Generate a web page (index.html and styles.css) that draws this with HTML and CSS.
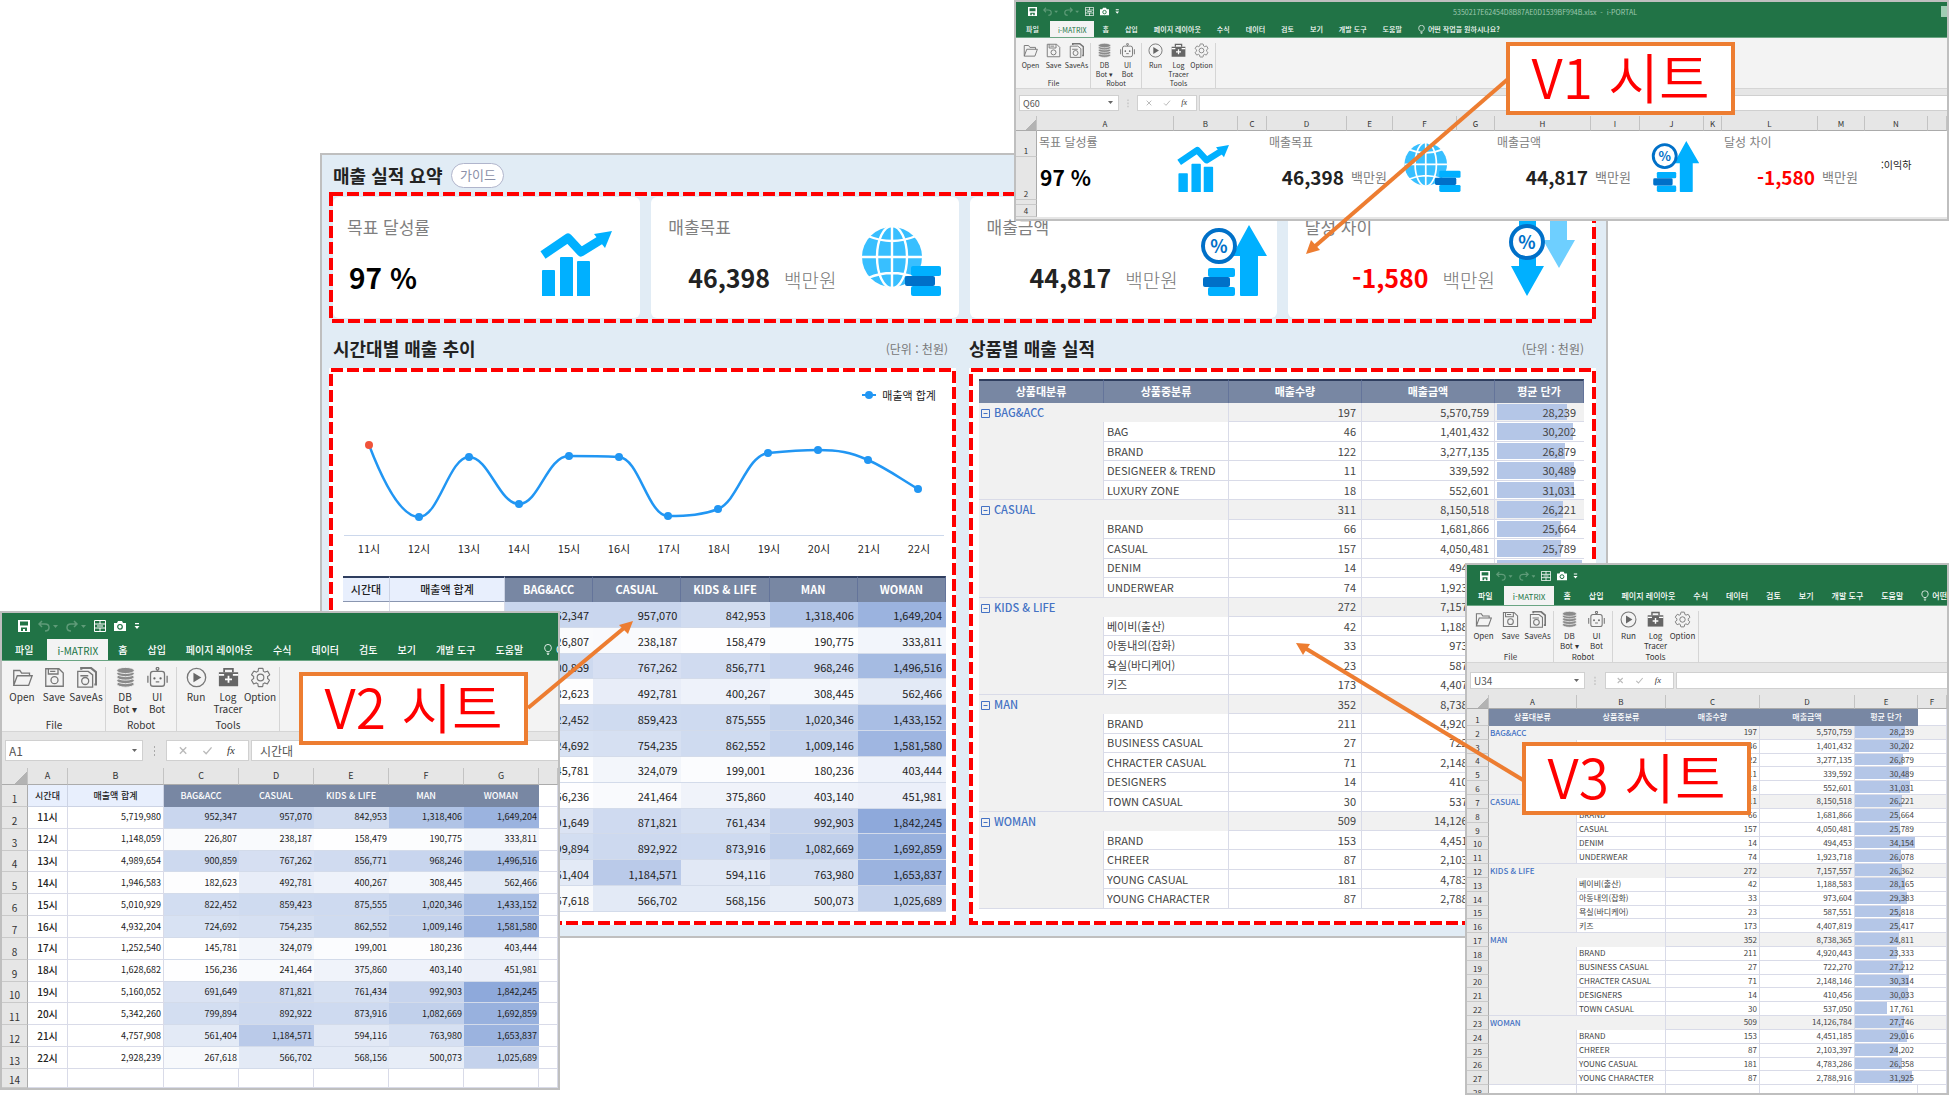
FILE: index.html
```html
<!DOCTYPE html>
<html lang="ko">
<head>
<meta charset="utf-8">
<title>매출 실적 요약</title>
<link rel="stylesheet" href="styles.css">
</head>
<body>
<svg class="symbols" aria-hidden="true">
  <symbol id="k-chart" viewBox="0 0 72 65"><path fill="#00b0ff" d="M2 40q0-1 1-1h11q1 0 1 1v25H2zM20 27q0-1 1-1h11q1 0 1 1v38H20zM37 31q0-1 1-1h11q1 0 1 1v34H37z"/><path d="M3 24 28 7 41 21 62 8" fill="none" stroke="#00b0ff" stroke-width="9" stroke-linejoin="round"/><path fill="#00b0ff" d="M54 3 72 0 65 17z"/></symbol>
  <symbol id="k-globe" viewBox="0 0 79 69"><circle cx="30" cy="30" r="30" fill="#38bfff"/><g fill="none" stroke="#fff" stroke-width="2.4"><path d="M30 0v60M0 30h60M6 9q24 10 48 0M6 51q24-10 48 0"/><ellipse cx="30" cy="30" rx="15" ry="31"/></g><rect x="49" y="39" width="30" height="10" rx="2" fill="#00b0ff"/><rect x="49" y="59" width="30" height="10" rx="2" fill="#00b0ff"/><rect x="43" y="49" width="30" height="10" rx="2" fill="#0070c8"/></symbol>
  <symbol id="k-up" viewBox="0 0 66 71"><path fill="#00b0ff" d="M48 0 66 31H57V70q0 1-1 1H40q-1 0-1-1V31H31z"/><rect x="7" y="43" width="27" height="9" rx="2" fill="#00b0ff"/><rect x="7" y="62" width="27" height="9" rx="2" fill="#00b0ff"/><rect x="2" y="52" width="27" height="10" rx="2" fill="#0070c8"/><circle cx="18" cy="21" r="16" fill="#fff" stroke="#0070c8" stroke-width="4"/><text x="18" y="28" text-anchor="middle" font-size="18" font-weight="700" fill="#0070c8">%</text></symbol>
  <symbol id="k-down" viewBox="0 0 66 81"><path fill="#6ecfff" d="M41 0h17v25h8L50 53 34 25h7z"/><path fill="#00b0ff" d="M10 0h17v51h8L18 81 2 51h8z"/><circle cx="18" cy="27" r="16" fill="#fff" stroke="#0070c8" stroke-width="4"/><text x="18" y="34" text-anchor="middle" font-size="18" font-weight="700" fill="#0070c8">%</text></symbol>

  <symbol id="q-save" viewBox="0 0 12 12"><path fill="#fff" fill-rule="evenodd" d="M0 0h12v12H0zM2 1.500v4h8v-4zM3 7.500V11h2V9h2v2h2V7.500z"/></symbol>
  <symbol id="q-undo" viewBox="0 0 20 12"><g fill="none" stroke="#5f9b78" stroke-width="1.500"><path d="M4 1 1 4l3 3M1 4h6q4 0 4 3.500T7 11"/></g><path fill="#5f9b78" d="M15 5h5l-2.500 3z"/></symbol>
  <symbol id="q-redo" viewBox="0 0 20 12"><g fill="none" stroke="#5f9b78" stroke-width="1.500"><path d="m8 1 3 3-3 3M11 4H5Q1 4 1 7.500T5 11"/></g><path fill="#5f9b78" d="M15 5h5l-2.500 3z"/></symbol>
  <symbol id="q-grid" viewBox="0 0 12 12"><g fill="none" stroke="#fff"><path d="M.5.5h11v11H.5zM.5 4h11M.5 8h11M6 .5V4M6 8v3.500M3 6h6"/></g></symbol>
  <symbol id="q-camera" viewBox="0 0 12 12"><path fill="#fff" d="M0 3h3l1-2h4l1 2h3v8H0z"/><circle cx="6" cy="6.800" r="2.300" fill="none" stroke="#217346" stroke-width="1.200"/></symbol>
  <symbol id="q-more" viewBox="0 0 6 12"><path fill="#fff" d="M1 3h4v1.200H1zM.5 6h5L3 9z"/></symbol>
  <symbol id="q-bulb" viewBox="0 0 10 13"><g fill="none" stroke="#fff"><path d="M3.500 9Q1 7 1 4.500a4 4 0 0 1 8 0Q9 7 6.500 9zM3.500 11h3M4 12.500h2"/></g></symbol>

  <symbol id="r-open" viewBox="0 0 24 24"><path d="M2 21V4h7l2 3h9v3M2 21 6 10h17l-4 11z" class="ln"/></symbol>
  <symbol id="r-save" viewBox="0 0 24 24"><path d="M2 2h15l5 5v15H2zM5 2v6h11V2M7 5h6" class="ln"/><circle cx="12" cy="15" r="4" class="ln"/></symbol>
  <symbol id="r-saveas" viewBox="0 0 24 24"><path d="M6 3V1h11l6 5v14h-2" fill="none" stroke="#777" stroke-width="2.500"/><path d="M2 5h12l5 4v14H2zM5 10h9" class="ln"/><circle cx="10.500" cy="16" r="4" class="ln"/></symbol>
  <symbol id="r-db" viewBox="0 0 24 24"><g fill="#8a8a8a" stroke="#f3f3f3"><ellipse cx="12" cy="19.500" rx="10" ry="3.500"/><ellipse cx="12" cy="15.500" rx="10" ry="3.500"/><ellipse cx="12" cy="11.500" rx="10" ry="3.500"/><ellipse cx="12" cy="7.500" rx="10" ry="3.500"/><ellipse cx="12" cy="4" rx="10" ry="3.500"/></g></symbol>
  <symbol id="r-bot" viewBox="0 0 24 24"><rect x="4" y="5" width="16" height="17" rx="3" class="ln"/><path d="M12 5V3M1 10v8M23 10v8M10 17h4" class="ln"/><circle cx="12" cy="2" r="1.500" class="ln"/><circle cx="8.500" cy="13" r="1.300" fill="#666"/><circle cx="15.500" cy="13" r="1.300" fill="#666"/></symbol>
  <symbol id="r-run" viewBox="0 0 24 24"><circle cx="12" cy="12" r="10.500" class="ln"/><path d="M8.500 6.500v11l9-5.500z" fill="#666"/></symbol>
  <symbol id="r-log" viewBox="0 0 24 24"><path d="M7 6V2h10v4" fill="none" stroke="#666" stroke-width="2"/><path d="M1 6h22v16H1z" fill="#666"/><path d="M12 10v8M8 14h8M1 9h6M17 9h6" stroke="#fff" stroke-width="2"/></symbol>
  <symbol id="r-option" viewBox="1 1 22 22"><path class="ln ln-thin" d="M19.400 13c.04-.3.060-.6.060-1s0-.6-.07-.94l2-1.580c.2-.14.230-.4.120-.6l-1.900-3.300c-.12-.2-.37-.3-.6-.2l-2.400.96c-.5-.4-1-.7-1.600-.94l-.36-2.540c-.04-.24-.24-.4-.5-.4h-3.840c-.24 0-.43.160-.47.4l-.36 2.540c-.6.240-1.130.570-1.620.94l-2.400-.96c-.2-.08-.47 0-.6.220L2.740 8.870c-.12.2-.08.470.12.6l2 1.600c-.04.3-.07.6-.07.930s.02.640.07.940l-2 1.580c-.2.140-.23.4-.12.6l1.900 3.300c.12.2.37.3.6.2l2.400-.96c.5.4 1 .7 1.600.940l.36 2.540c.05.240.240.4.5.4h3.800c.24 0 .44-.16.470-.4l.36-2.540c.6-.24 1.130-.56 1.620-.94l2.400.96c.2.080.470 0 .6-.2l1.900-3.300c.12-.2.070-.47-.12-.6z"/><circle cx="12" cy="12" r="3.500" class="ln ln-thin"/></symbol>
</svg>

<main class="board">
  <section class="dashboard">
    <header class="dash-head">
      <h1>매출 실적 요약</h1>
      <button class="guide" type="button">가이드</button>
    </header>
    <div class="frame kpis">
      <article class="card card-rate"><div class="card-text"><h2>목표 달성률</h2><p><b>97 %</b></p></div><svg width="72" height="65"><use href="#k-chart"/></svg></article>
      <article class="card card-goal"><div class="card-text"><h2>매출목표</h2><p><b>46,398</b><span>백만원</span></p></div><svg width="79" height="69"><use href="#k-globe"/></svg></article>
      <article class="card card-sales"><div class="card-text"><h2>매출금액</h2><p><b>44,817</b><span>백만원</span></p></div><svg width="66" height="71"><use href="#k-up"/></svg></article>
      <article class="card card-gap"><div class="card-text"><h2>달성 차이</h2><p><b class="minus">-1,580</b><span>백만원</span></p></div><svg width="66" height="81"><use href="#k-down"/></svg></article>
      <svg class="dashes"><rect x="2" y="2"/></svg>
    </div>
    <div class="columns">
      <section>
        <header class="sub-head sub-left"><h2>시간대별 매출 추이</h2><span>(단위 : 천원)</span></header>
        <div class="frame panel panel-left">
          <div class="chart">
            <p class="legend"><svg width="14" height="8"><path d="M0 4h14" stroke="#2196f3" stroke-width="2"/><circle cx="7" cy="4" r="4" fill="#2196f3"/></svg>매출액 합계</p>
            <svg class="plot" viewBox="0 0 600 131" preserveAspectRatio="none">
              <path fill="none" stroke="#2196f3" stroke-width="2.5" d="M25 41C40 80 58 113 75 113C95 113 105 53 125 53C145 53 155 100 175 100C195 100 203 52 225 52C245 52 255 52 275 53C295 54 304 112 324 112C344 112 359 111 374 105C394 97 402 52 424 49C444 47 456 46 474 46C494 46 506 48 524 56C542 64 554 73 574 85"/>
              <g fill="#2196f3"><circle cx="75" cy="113" r="4"/><circle cx="125" cy="53" r="4"/><circle cx="175" cy="100" r="4"/><circle cx="225" cy="52" r="4"/><circle cx="275" cy="53" r="4"/><circle cx="324" cy="112" r="4"/><circle cx="374" cy="105" r="4"/><circle cx="424" cy="49" r="4"/><circle cx="474" cy="46" r="4"/><circle cx="524" cy="56" r="4"/><circle cx="574" cy="85" r="4"/></g>
              <circle cx="25" cy="41" r="4" fill="#f0533a"/>
            </svg>
            <div class="hours"><span>11시</span><span>12시</span><span>13시</span><span>14시</span><span>15시</span><span>16시</span><span>17시</span><span>18시</span><span>19시</span><span>20시</span><span>21시</span><span>22시</span></div>
          </div>
          <table class="grid heat" id="dash-hours"></table>
          <svg class="dashes"><rect x="2" y="2"/></svg>
        </div>
      </section>
      <section>
        <header class="sub-head sub-right"><h2>상품별 매출 실적</h2><span>(단위 : 천원)</span></header>
        <div class="frame panel panel-right">
          <table class="grid tree" id="dash-products"></table>
          <svg class="dashes"><rect x="2" y="2"/></svg>
        </div>
      </section>
    </div>
  </section>

  <section class="window win-v1" data-cell="Q60" data-value="" data-title="5350217E62454D8B87AE0D1539BF994B.xlsx  -  i-PORTAL" data-tell="어떤 작업을 원하시나요?">
    <table class="sheet" id="sheet-v1">
      <colgroup><col style="width:21px"><col style="width:137px"><col style="width:64px"><col style="width:29px"><col style="width:80px"><col style="width:46px"><col style="width:64px"><col style="width:38px"><col style="width:96px"><col style="width:49px"><col style="width:64px"><col style="width:18px"><col style="width:96px"><col style="width:47px"><col style="width:63px"><col></colgroup>
      <thead><tr><td class="corner"></td><th>A</th><th>B</th><th>C</th><th>D</th><th>E</th><th>F</th><th>G</th><th>H</th><th>I</th><th>J</th><th>K</th><th>L</th><th>M</th><th>N</th><th></th></tr></thead>
      <tbody>
        <tr class="r-label"><th>1</th><td>목표 달성률</td><td rowspan="2" class="pic"><svg width="52" height="47"><use href="#k-chart"/></svg></td><td></td><td colspan="2">매출목표</td><td rowspan="2" class="pic pic-right"><svg width="57" height="49"><use href="#k-globe"/></svg></td><td></td><td colspan="2">매출금액</td><td rowspan="2" class="pic pic-right"><svg width="49" height="51"><use href="#k-up"/></svg></td><td></td><td colspan="2">달성 차이</td><td rowspan="2" class="note">:이익하</td><td></td></tr>
        <tr class="r-value"><th>2</th><td class="rate">97 %</td><td></td><td class="num">46,398</td><td>백만원</td><td></td><td class="num">44,817</td><td>백만원</td><td></td><td class="num minus">-1,580</td><td>백만원</td><td></td></tr>
        <tr class="r-thin"><th></th><td colspan="15"></td></tr>
        <tr><th>4</th><td colspan="15"></td></tr>
      </tbody>
    </table>
  </section>

  <section class="window win-v2" data-cell="A1" data-value="시간대" data-title="" data-tell="어떤 작업을 원하시나요?">
    <table class="sheet heat" id="sheet-v2"></table>
  </section>

  <section class="window win-v3" data-cell="U34" data-value="" data-title="" data-tell="어떤 작업을 원하시나요?">
    <table class="sheet tree" id="sheet-v3"></table>
  </section>

  <svg class="arrows" width="1949" height="1095">
    <g stroke="#ed7d31" stroke-width="4"><path d="M1508 79 1313 248"/><path d="M528 708 624 628"/><path d="M1523 780 1305 648"/></g>
    <g fill="#ed7d31"><path d="M1306 254 1311 240 1320 250z"/><path d="M633 621 628 634 619 625z"/><path d="M1296 643 1310 644 1303 655z"/></g>
  </svg>
  <p class="callout call-v1">V1 시트</p>
  <p class="callout call-v2">V2 시트</p>
  <p class="callout call-v3">V3 시트</p>
</main>
<script src="app.js"></script>
</body>
</html>
```
FILE: styles.css
```css
* { box-sizing: border-box; }
body {
  margin: 0;
  background: #fff;
  color: #222;
  font-family: "Noto Sans CJK KR", "Noto Sans", sans-serif;
  font-size: 11px;
}
h1, h2, p { margin: 0; }
button, input { font: inherit; color: inherit; border: 0; padding: 0; margin: 0; background: none; }
.symbols { position: absolute; width: 0; height: 0; }
.ln { fill: none; stroke: #777; stroke-width: 1.5; }
.ln-thin { stroke-width: 1.2; }
.minus { color: #f00; }

.board { position: relative; min-height: 100vh; overflow: hidden; }

/* dashboard */
.dashboard {
  position: absolute;
  left: 320px;
  top: 153px;
  width: 1288px;
  padding: 0 10px 11px 7px;
  background: #e1ecf5;
  border: 2px solid #bfbfbf;
}
.dash-head { display: flex; align-items: center; gap: 9px; height: 37px; padding: 3px 4px 0; }
.dash-head h1, .sub-head h2 { font-size: 18px; font-weight: 500; line-height: 24px; }
.guide {
  width: 53px;
  height: 25px;
  border: 1px solid #b0b5cc;
  border-radius: 13px;
  background: #fff;
  color: #8b90a8;
  font-size: 13px;
  line-height: 20px;
}
.frame { position: relative; }
.dashes { position: absolute; inset: 0; width: 100%; height: 100%; pointer-events: none; }
.dashes rect {
  width: calc(100% - 4px);
  height: calc(100% - 4px);
  fill: none;
  stroke: #f00;
  stroke-width: 4;
  stroke-dasharray: 12 4;
}
.kpis { display: grid; grid-template-columns: repeat(4, 1fr); gap: 11px; padding: 5px 1px 5px 4px; }
.card { display: flex; align-items: flex-end; height: 121px; padding-bottom: 22px; background: #fff; border-radius: 6px; }
.card svg { flex: none; }
.card-text { flex: 1; align-self: flex-start; padding-top: 19px; text-align: right; }
.card h2 { padding-left: 17px; font-size: 17px; font-weight: 400; line-height: 22px; color: #808080; text-align: left; }
.card p { margin-top: 21px; line-height: 36px; white-space: nowrap; }
.card b { font-size: 25px; }
.card span { margin-left: 14px; font-size: 19px; font-weight: 300; color: #777; }
.card-rate { padding-right: 28px; }
.card-rate h2 { padding-left: 14px; }
.card-rate p { padding-left: 16px; text-align: left; color: #000; }
.card-rate b { font-size: 28px; }
.card-goal { padding-right: 18px; gap: 25px; }
.card-sales { padding-right: 10px; gap: 23px; }
.card-gap { padding-right: 20px; gap: 14px; }

.columns { display: grid; grid-template-columns: 1fr 1fr; gap: 13px; }
.sub-head { display: flex; justify-content: space-between; align-items: center; height: 45px; padding: 5px 12px 0 0; }
.sub-left { padding-left: 4px; padding-right: 8px; }
.dash-head h1, .sub-head h2 { font-weight: 700; }
.sub-head span { font-size: 12px; color: #777; }
.panel { height: 557px; background: #fff; }
.panel-left { padding: 4px 10px 0 14px; }
.panel-right { padding: 11px 12px 0 10px; }
.chart { height: 204px; padding: 14px 2px 0 1px; }
.legend { display: flex; align-items: center; justify-content: flex-end; gap: 6px; height: 18px; padding-right: 8px; }
.plot { display: block; width: 100%; height: 132px; border-bottom: 1px solid #ccd8ec; }
.hours { display: grid; grid-template-columns: repeat(12, 1fr); text-align: center; line-height: 24px; }

/* data tables */
table { width: 100%; border-spacing: 0; table-layout: fixed; }
th, td { padding: 0; white-space: nowrap; overflow: hidden; font-weight: 400; }
.heat td, .tree td { border-right: 1px solid #d9dbe8; border-bottom: 1px solid #d9dbe8; }
.grid thead th {
  height: 26px;
  border-top: 2px solid #2f3e5f;
  border-right: 1px solid #64749a;
  background: #7887a3;
  color: #fff;
  font-weight: 700;
}
.grid.heat { height: 336px; line-height: 16px; }
.grid.heat thead th.light { background: #e8effd; color: #222; font-weight: 500; border-right-color: #ccd3e4; border-bottom: 1px solid #8a96b0; }
.heat td { text-align: right; padding-right: 4px; }
.grid.heat thead th { line-height: 14px; padding-bottom: 2px; }
.grid.heat td { padding-top: 2px; }
.heat td.tint { border-right: 0; border-bottom-color: #d3dbea; }
.heat td.hour { text-align: center; font-weight: 500; padding-right: 0; }
.grid.tree { height: 530px; line-height: 15px; color: #444; }
.grid.tree thead th { height: 24px; padding-bottom: 2px; }
.tree td { text-align: right; padding-right: 5px; }
.tree td.name { text-align: left; padding-left: 3px; }
.tree td.group { text-align: left; padding-left: 2px; background: #f1f1f1; color: #4472c4; font-weight: 500; border-bottom: 0; }
.tree td.void { background: #f1f1f1; }
.tree tr.total td { background-color: #f1f1f1; }
.tree td.price { position: relative; padding-right: 8px; border-right: 0; }
.bar { position: absolute; left: 2px; top: 1px; bottom: 1px; background: #b4c6e7; }
.price span { position: relative; }
.fold { display: inline-block; width: 9px; height: 9px; margin-right: 4px; vertical-align: -1px; }
.fold svg { display: block; }

/* spreadsheet windows */
.window { position: absolute; overflow: hidden; border: 2px solid #bfbfbf; background: #e6e6e6; }
.win-v1 {
  left: 1014px; top: 0; width: 935px; height: 221px;
  --font: 7px; --pad: 8px; --bar: 19px; --tabs: 17px; --ribbon: 51px; --item: 23px; --icon: 15px; --line: 9px;
  --q: 9px; --qgap: 6px; --qpad: 12px; --gap: 6px; --box: 16px; --below: 5px; --name: 100px; --dots: 18px; --fx: 60px; --head: 15px; --cell: 9px;
}
.win-v2 {
  left: 0; top: 611px; width: 560px; height: 479px;
  --font: 10px; --pad: 10px; --bar: 26px; --tabs: 22px; --ribbon: 71px; --item: 32px; --icon: 21px; --line: 12px;
  --q: 12px; --qgap: 8px; --qpad: 16px; --gap: 8px; --box: 21px; --below: 7px; --name: 138px; --dots: 23px; --fx: 83px; --head: 17px; --cell: 12px;
}
.win-v3 {
  left: 1465px; top: 563px; width: 484px; height: 532px;
  --font: 8px; --pad: 9px; --bar: 21px; --tabs: 20px; --ribbon: 57px; --item: 27px; --icon: 17px; --line: 10px;
  --q: 10px; --qgap: 6px; --qpad: 13px; --gap: 9px; --box: 17px; --below: 6px; --name: 115px; --dots: 20px; --fx: 69px; --head: 14px; --cell: 10px;
}
.chrome { font-size: var(--font); }
.titlebar { position: relative; display: flex; align-items: center; gap: var(--qgap); height: var(--bar); padding-left: var(--qpad); background: #217346; }
.titlebar svg { display: block; height: var(--q); width: auto; }
.doc-title { flex: 1; padding-right: 298px; text-align: right; color: #9fc9b0; white-space: pre; }
.restore { width: 6px; height: 11px; background: #a0cdb4; }
.tabs { display: flex; height: var(--tabs); background: #217346; color: #fff; font-weight: 500; white-space: nowrap; overflow: hidden; border-bottom: 1px solid #6aa583; }
.tabs button { flex: none; padding: 0 var(--pad); line-height: calc(var(--tabs) - 3px); }
.tabs button:first-child { padding: 0 14px 0 13px; }
.win-v1 .tabs button:first-child { padding: 0 11px 0 10px; }
.win-v3 .tabs button:first-child { padding: 0 11px; }
.tabs .on { background: #f3f3f3; color: #217346; height: var(--tabs); font-weight: 400; }
.tabs .tell { display: flex; align-items: center; gap: 3px; }
.tell svg { height: 11px; width: var(--font); }
.ribbon { display: flex; height: var(--ribbon); padding: 6px 0 0 1px; background: #f3f3f3; border-bottom: 1px solid #d5d5d5; color: #333; }
.win-v1 .ribbon, .win-v3 .ribbon { padding-top: 5px; }
.rgroup { display: flex; flex-direction: column; justify-content: space-between; padding: 0 2px; border-right: 1px solid #d5d5d5; }
.win-v2 .rgroup { padding: 0 3px; }
.rgroup > span { text-align: center; line-height: var(--line); }
.items { display: flex; }
.items button { display: flex; flex-direction: column; align-items: center; width: var(--item); line-height: var(--line); white-space: pre; }
.items svg { width: var(--icon); height: var(--icon); margin-bottom: 3px; flex: none; }
.formula { display: flex; padding: var(--gap) 0 var(--below) 3px; font-size: var(--cell); color: #555; }
.formula > * { height: var(--box); background: #fff; border: 1px solid #d0d0d0; }
.namebox { display: flex; align-items: center; width: var(--name); padding: 0 5px 0 3px; }
.namebox input { flex: 1; min-width: 0; }
.formula .dots { width: var(--dots); border: 0; background: none; }
.dots svg, .fx svg { display: block; width: 100%; height: 100%; }
.fx { width: var(--fx); margin-right: 2px; }
.formula > input { flex: 1; min-width: 0; padding-left: 8px; border-right: 0; }

.sheet { background: #fff; }
.sheet thead tr { height: var(--head); }
.sheet thead th, .sheet thead td.corner { background: #e6e6e6; border: 0; border-right: 1px solid #c3c3c3; border-bottom: 1px solid #ababab; line-height: 12px; color: #333; }
.sheet .corner { background: linear-gradient(135deg, #e6e6e6 70%, #b3b3b3 70%) !important; }
.sheet tbody > tr > th:first-child { background: #e6e6e6; border-right: 1px solid #ababab; border-bottom: 1px solid #c9c9c9; vertical-align: bottom; color: #333; }
.sheet td.caption { background: #7887a3; color: #fff; text-align: center; padding: 0; font-weight: 500; border-color: #7887a3; }
.sheet td.caption.light { background: #e8effd; color: #222; border-color: #ccd3e4; }
#sheet-v1 { font-size: 12px; color: #808080; }
#sheet-v1 thead, #sheet-v1 tbody th { font-size: 8px; }
#sheet-v1 .r-label { height: 26px; vertical-align: top; line-height: 22px; }
#sheet-v1 .r-value { height: 43px; font-size: 13px; line-height: 26px; }
#sheet-v1 .r-value td { overflow: visible; padding-left: 4px; padding-bottom: 3px; }
#sheet-v1 .r-value .rate { padding-left: 3px; color: #000; font-size: 21px; font-weight: 700; }
#sheet-v1 .r-value .num { padding: 0 3px 3px 0; font-size: 19px; font-weight: 700; text-align: right; color: #222; }
#sheet-v1 .r-value .minus { color: #f00; }
#sheet-v1 .r-thin { height: 5px; }
#sheet-v1 tr { line-height: 10px; }
#sheet-v1 tr.r-thin th { line-height: 4px; }
#sheet-v1 tr > td { padding-left: 2px; }
#sheet-v1 .pic { vertical-align: bottom; padding: 0 0 8px 3px; line-height: 0; overflow: visible; }
#sheet-v1 .pic-right { padding-left: 11px; }
#sheet-v1 .note { padding-left: 16px; padding-bottom: 2px; font-size: 10px; color: #222; vertical-align: middle; }
#sheet-v1 th { line-height: 11px; }
#sheet-v2 { height: 320px; font-size: 9px; line-height: 14px; }
#sheet-v2 td { padding-right: 2px; }
#sheet-v2 td.hour, #sheet-v2 td.caption { padding: 0; }
#sheet-v2 tbody th, #sheet-v2 td.hour { font-size: 10px; }
#sheet-v3 { height: 404px; font-size: 8px; line-height: 10px; color: #444; }
#sheet-v3 td { padding-right: 2px; }
#sheet-v3 td.name { padding-left: 2px; }
#sheet-v3 td.group { padding-left: 1px; }
#sheet-v3 td.price { padding-right: 4px; }
#sheet-v3 td.caption { padding: 0; }
#sheet-v3 .bar { left: 0; top: 0; }

/* callouts */
.arrows { position: absolute; left: 0; top: 0; }
.callout {
  position: absolute;
  width: 229px;
  height: 73px;
  border: 4px solid #ed7d31;
  background: #fff;
  color: #f00;
  font-size: 55px;
  font-weight: 350;
  line-height: 58px;
  text-align: center;
}
.call-v1 { left: 1506px; top: 42px; }
.call-v2 { left: 299px; top: 672px; }
.call-v3 { left: 1522px; top: 742px; }
```
FILE: app.js
```js
const categories = ['BAG&amp;ACC', 'CASUAL', 'KIDS &amp; LIFE', 'MAN', 'WOMAN'];
const hours = [
  ['11시', 5719980, 952347, 957070, 842953, 1318406, 1649204],
  ['12시', 1148059, 226807, 238187, 158479, 190775, 333811],
  ['13시', 4989654, 900859, 767262, 856771, 968246, 1496516],
  ['14시', 1946583, 182623, 492781, 400267, 308445, 562466],
  ['15시', 5010929, 822452, 859423, 875555, 1020346, 1433152],
  ['16시', 4932204, 724692, 754235, 862552, 1009146, 1581580],
  ['17시', 1252540, 145781, 324079, 199001, 180236, 403444],
  ['18시', 1628682, 156236, 241464, 375860, 403140, 451981],
  ['19시', 5160052, 691649, 871821, 761434, 992903, 1842245],
  ['20시', 5342260, 799894, 892922, 873916, 1082669, 1692859],
  ['21시', 4757908, 561404, 1184571, 594116, 763980, 1653837],
  ['22시', 2928239, 267618, 566702, 568156, 500073, 1025689]
];
const productHeads = ['상품대분류', '상품중분류', '매출수량', '매출금액', '평균 단가'];
const products = [
  [['BAG&amp;ACC', 197, 5570759, 28239], ['BAG', 46, 1401432, 30202], ['BRAND', 122, 3277135, 26879], ['DESIGNEER &amp; TREND', 11, 339592, 30489], ['LUXURY ZONE', 18, 552601, 31031]],
  [['CASUAL', 311, 8150518, 26221], ['BRAND', 66, 1681866, 25664], ['CASUAL', 157, 4050481, 25789], ['DENIM', 14, 494453, 34154], ['UNDERWEAR', 74, 1923718, 26078]],
  [['KIDS &amp; LIFE', 272, 7157557, 26362], ['베이비(출산)', 42, 1188583, 28165], ['아동내의(잡화)', 33, 973604, 29383], ['욕실(바디케어)', 23, 587551, 25818], ['키즈', 173, 4407819, 25417]],
  [['MAN', 352, 8738365, 24811], ['BRAND', 211, 4920443, 23333], ['BUSINESS CASUAL', 27, 722270, 27212], ['CHRACTER CASUAL', 71, 2148146, 30314], ['DESIGNERS', 14, 410456, 30033], ['TOWN CASUAL', 30, 537050, 17761]],
  [['WOMAN', 509, 14126784, 27746], ['BRAND', 153, 4451185, 29016], ['CHREER', 87, 2103397, 24202], ['YOUNG CASUAL', 181, 4783286, 26358], ['YOUNG CHARACTER', 87, 2788916, 31925]]
];
const fmt = n => n.toLocaleString('en-US');
const cols = list => '<colgroup>' + list.map(w => w ? `<col style="width:${w}px">` : '<col>').join('') + '</colgroup>';
const letters = text => '<thead><tr><td class="corner"></td>' + [...text].map(c => `<th>${c.trim()}</th>`).join('') + '</tr></thead>';

// White at the smallest value, blue at the largest
function tint(value) {
  const t = (value - 145781) / (1842245 - 145781);
  const mix = end => Math.round(255 + (end - 255) * t);
  return `background:rgb(${mix(142)},${mix(169)},${mix(219)})`;
}
function hourCells(row) {
  return `<td class="hour">${row[0]}</td><td>${fmt(row[1])}</td>` +
    row.slice(2).map(v => `<td class="tint" style="${tint(v)}">${fmt(v)}</td>`).join('');
}
function productRows(numbered, foldable) {
  let line = 2;
  const lead = () => numbered ? `<th>${line++}</th>` : '';
  const tail = numbered ? '<td></td>' : '';
  const fold = foldable ? '<button class="fold" type="button" aria-label="접기"><svg width="9" height="9"><path d="M.5.5h8v8h-8zM2.5 4.500h4" fill="none" stroke="#4472c4"/></svg></button>' : '';
  const numbers = r => `<td>${r[1]}</td><td>${fmt(r[2])}</td><td class="price"><i class="bar" style="width:${Math.round(r[3] / 34154 * 96)}%"></i><span>${fmt(r[3])}</span></td>${tail}`;
  return products.map(group => group.map((r, i) => {
    if (i === 0) return `<tr class="total">${lead()}<td class="group" colspan="2">${fold}${r[0]}</td>${numbers(r)}</tr>`;
    const side = i === 1 ? `<td class="void" rowspan="${group.length - 1}"></td>` : '';
    return `<tr>${lead()}${side}<td class="name">${r[0]}</td>${numbers(r)}</tr>`;
  }).join('')).join('');
}

document.getElementById('dash-hours').innerHTML = cols([47, 115, 0, 0, 0, 0, 0]) +
  '<thead><tr><th class="light">시간대</th><th class="light">매출액 합계</th>' + categories.map(c => `<th>${c}</th>`).join('') + '</tr></thead><tbody>' +
  hours.map(r => `<tr>${hourCells(r)}</tr>`).join('') + '</tbody>';

document.getElementById('dash-products').innerHTML = cols([125, 125, 133, 133, 0]) +
  '<thead><tr>' + productHeads.map(h => `<th>${h}</th>`).join('') + '</tr></thead><tbody>' + productRows(false, true) + '</tbody>';

document.getElementById('sheet-v2').innerHTML = cols([26, 40, 96, 75, 75, 75, 75, 75, 0]) + letters('ABCDEFG ') +
  '<tbody><tr style="height:22px"><th>1</th><td class="caption light">시간대</td><td class="caption light">매출액 합계</td>' +
  categories.map(c => `<td class="caption">${c}</td>`).join('') + '<td></td></tr>' +
  hours.map((r, i) => `<tr><th>${i + 2}</th>${hourCells(r)}<td></td></tr>`).join('') +
  '<tr style="height:19px"><th>14</th>' + '<td></td>'.repeat(8) + '</tr></tbody>';

document.getElementById('sheet-v3').innerHTML = cols([22, 88, 89, 94, 95, 63, 0]) + letters('ABCDEF') +
  '<tbody><tr style="height:17px"><th>1</th>' + productHeads.map(h => `<td class="caption">${h}</td>`).join('') + '<td></td></tr>' +
  productRows(true, false) + '<tr><th>28</th>' + '<td></td>'.repeat(6) + '</tr></tbody>';

// Excel title bar, ribbon and formula bar shared by the three windows
const icon = (id, box) => `<svg viewBox="0 0 ${box}"><use href="#${id}"/></svg>`;
const item = (id, label) => `<button type="button">${icon(id, '24 24')}${label}</button>`;
document.querySelectorAll('.window').forEach(win => {
  const d = win.dataset;
  const chrome = document.createElement('div');
  chrome.className = 'chrome';
  chrome.innerHTML = `
    <div class="titlebar">
      <button type="button" aria-label="저장">${icon('q-save', '12 12')}</button>
      <button type="button" aria-label="실행 취소">${icon('q-undo', '20 12')}</button>
      <button type="button" aria-label="다시 실행">${icon('q-redo', '20 12')}</button>
      <button type="button" aria-label="표">${icon('q-grid', '12 12')}</button>
      <button type="button" aria-label="카메라">${icon('q-camera', '12 12')}</button>
      <button type="button" aria-label="더 보기">${icon('q-more', '6 12')}</button>
      ${d.title ? `<span class="doc-title">${d.title}</span><i class="restore"></i>` : ''}
    </div>
    <nav class="tabs">
      <button type="button">파일</button><button type="button" class="on">i-MATRIX</button>
      ${['홈', '삽입', '페이지 레이아웃', '수식', '데이터', '검토', '보기', '개발 도구', '도움말'].map(t => `<button type="button">${t}</button>`).join('')}
      <button type="button" class="tell">${icon('q-bulb', '10 13')}${d.tell}</button>
    </nav>
    <div class="ribbon">
      <div class="rgroup"><div class="items">${item('r-open', 'Open')}${item('r-save', 'Save')}${item('r-saveas', 'SaveAs')}</div><span>File</span></div>
      <div class="rgroup"><div class="items">${item('r-db', 'DB\nBot ▾')}${item('r-bot', 'UI\nBot')}</div><span>Robot</span></div>
      <div class="rgroup"><div class="items">${item('r-run', 'Run')}${item('r-log', 'Log\nTracer')}${item('r-option', 'Option')}</div><span>Tools</span></div>
    </div>
    <div class="formula">
      <div class="namebox"><input aria-label="이름 상자" value="${d.cell}"><svg width="5" height="4"><path d="M0 0h5L2.500 3z" fill="#666"/></svg></div>
      <div class="dots"><svg viewBox="0 0 23 21"><path d="M11 6h1v2h-1zM11 10h1v2h-1zM11 14h1v2h-1z" fill="#aaa"/></svg></div>
      <div class="fx"><svg viewBox="0 0 83 21"><path d="m11 7 7 7m0-7-7 7M37 11l3 3 6-7" fill="none" stroke="#bbb" stroke-width="1.500"/><text x="63" y="14" font-size="12" font-style="italic" font-family="Liberation Serif, serif" fill="#333">fx</text></svg></div>
      <input aria-label="수식 입력줄" value="${d.value}">
    </div>`;
  win.prepend(chrome);
});
```
